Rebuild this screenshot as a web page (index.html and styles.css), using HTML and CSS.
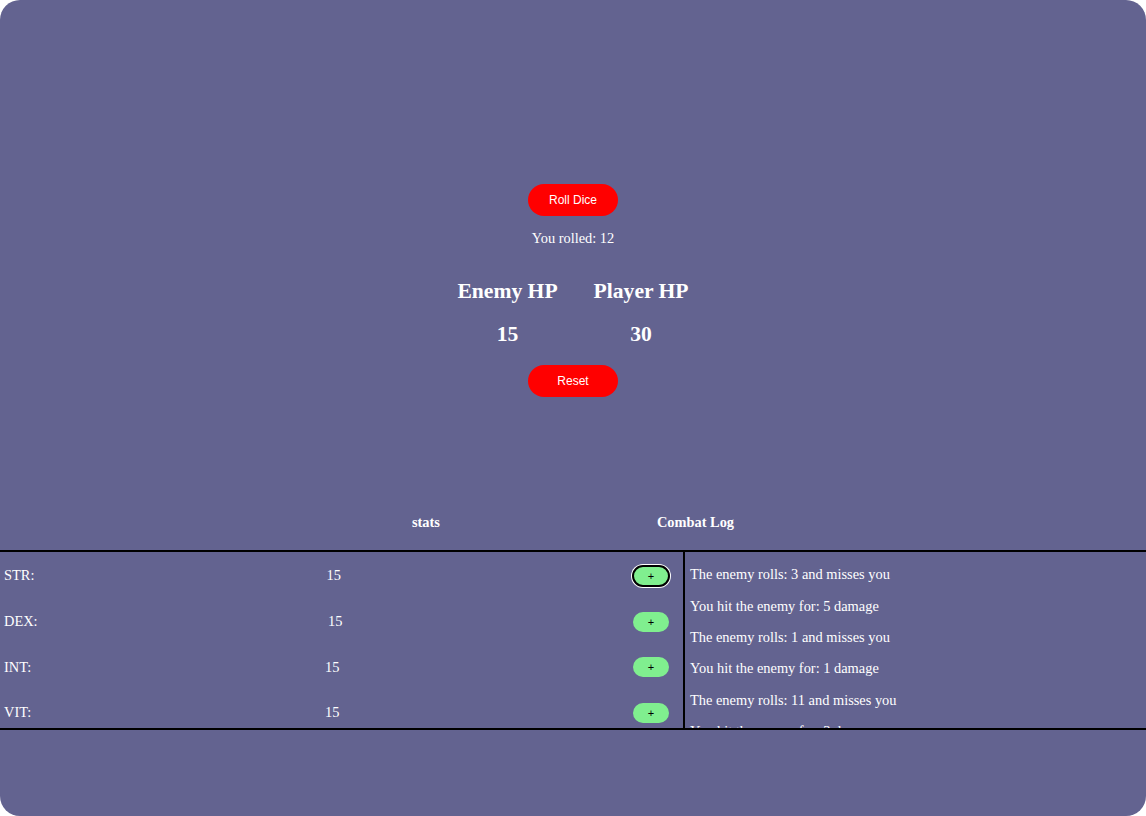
FILE: index.html
```html
<!DOCTYPE html>
<html>
<head>
<meta charset="utf-8">
<link rel="stylesheet" href="styles.css">
</head>
<body>
<div class="app">
  <section class="game">
    <button class="pill red roll">Roll Dice</button>
    <p class="rolled">You rolled: 12</p>
    <div class="hp">
      <div class="hp-col">
        <h2 class="hp-title">Enemy HP</h2>
        <h2 class="hp-value">15</h2>
      </div>
      <div class="hp-col">
        <h2 class="hp-title">Player HP</h2>
        <h2 class="hp-value">30</h2>
      </div>
    </div>
    <button class="pill red reset">Reset</button>
  </section>

  <div class="headings">
    <span class="heading">stats</span>
    <span class="heading">Combat Log</span>
  </div>

  <div class="panel">
    <div class="stats">
      <div class="stat-row"><span>STR:</span><span>15</span><button class="plus focused">+</button></div>
      <div class="stat-row"><span>DEX:</span><span>15</span><button class="plus">+</button></div>
      <div class="stat-row"><span>INT:</span><span>15</span><button class="plus">+</button></div>
      <div class="stat-row"><span>VIT:</span><span>15</span><button class="plus">+</button></div>
    </div>
    <div class="log">
      <p>The enemy rolls: 3 and misses you</p>
      <p>You hit the enemy for: 5 damage</p>
      <p>The enemy rolls: 1 and misses you</p>
      <p>You hit the enemy for: 1 damage</p>
      <p>The enemy rolls: 11 and misses you</p>
      <p>You hit the enemy for: 3 damage</p>
    </div>
  </div>
</div>
</body>
</html>
```
FILE: styles.css
```css
html, body {
  margin: 0;
  padding: 0;
  background: #ffffff;
}
.app {
  width: 1146px;
  height: 816px;
  background: #636390;
  border-radius: 20px;
  overflow: hidden;
  color: #ffffff;
  font-family: "Liberation Serif", "Times New Roman", serif;
  font-size: 14.4px;
  display: flex;
  flex-direction: column;
}
.game {
  display: flex;
  flex-direction: column;
  align-items: center;
  padding-top: 184px;
}
.pill {
  width: 90px;
  height: 32px;
  border: none;
  border-radius: 16px;
  font-family: "Liberation Sans", Arial, sans-serif;
  font-size: 12px;
  color: #ffffff;
  padding: 0;
}
.red { background: #ff0000; }
.rolled {
  margin: 14px 0 0;
  line-height: 16px;
}
.hp {
  display: flex;
  gap: 36px;
  margin-top: 32px;
}
.hp-col {
  display: flex;
  flex-direction: column;
  align-items: center;
}
.hp h2 {
  margin: 0;
  font-size: 21.6px;
  line-height: 26px;
  font-weight: bold;
}
.hp-value { margin-top: 17px !important; }
.reset { margin-top: 18px; }
.headings {
  display: flex;
  justify-content: center;
  gap: 217px;
  margin-top: 117px;
  line-height: 17px;
  font-weight: bold;
}
.panel {
  margin-top: 19px;
  height: 176px;
  border-top: 2px solid #000;
  border-bottom: 2px solid #000;
  display: flex;
}
.stats {
  width: 685px;
  flex-shrink: 0;
  box-sizing: border-box;
  padding: 1px 14px 0 4px;
  border-right: 2px solid #000;
  overflow: hidden;
}
.stat-row {
  height: 45.7px;
  display: flex;
  justify-content: space-between;
  align-items: center;
}
.plus {
  width: 36px;
  height: 20px;
  border: none;
  border-radius: 10px;
  background: #80ef8f;
  color: #000;
  font-family: "Liberation Sans", Arial, sans-serif;
  font-size: 11px;
  padding: 0;
  line-height: 20px;
}
.focused {
  outline: 2px solid #000;
  outline-offset: -1px;
  box-shadow: 0 0 0 2px #fff;
}
.log {
  flex: 1;
  padding-left: 5px;
  overflow: hidden;
}
.log p {
  margin: 14.4px 0;
  line-height: 16.9px;
}
```
